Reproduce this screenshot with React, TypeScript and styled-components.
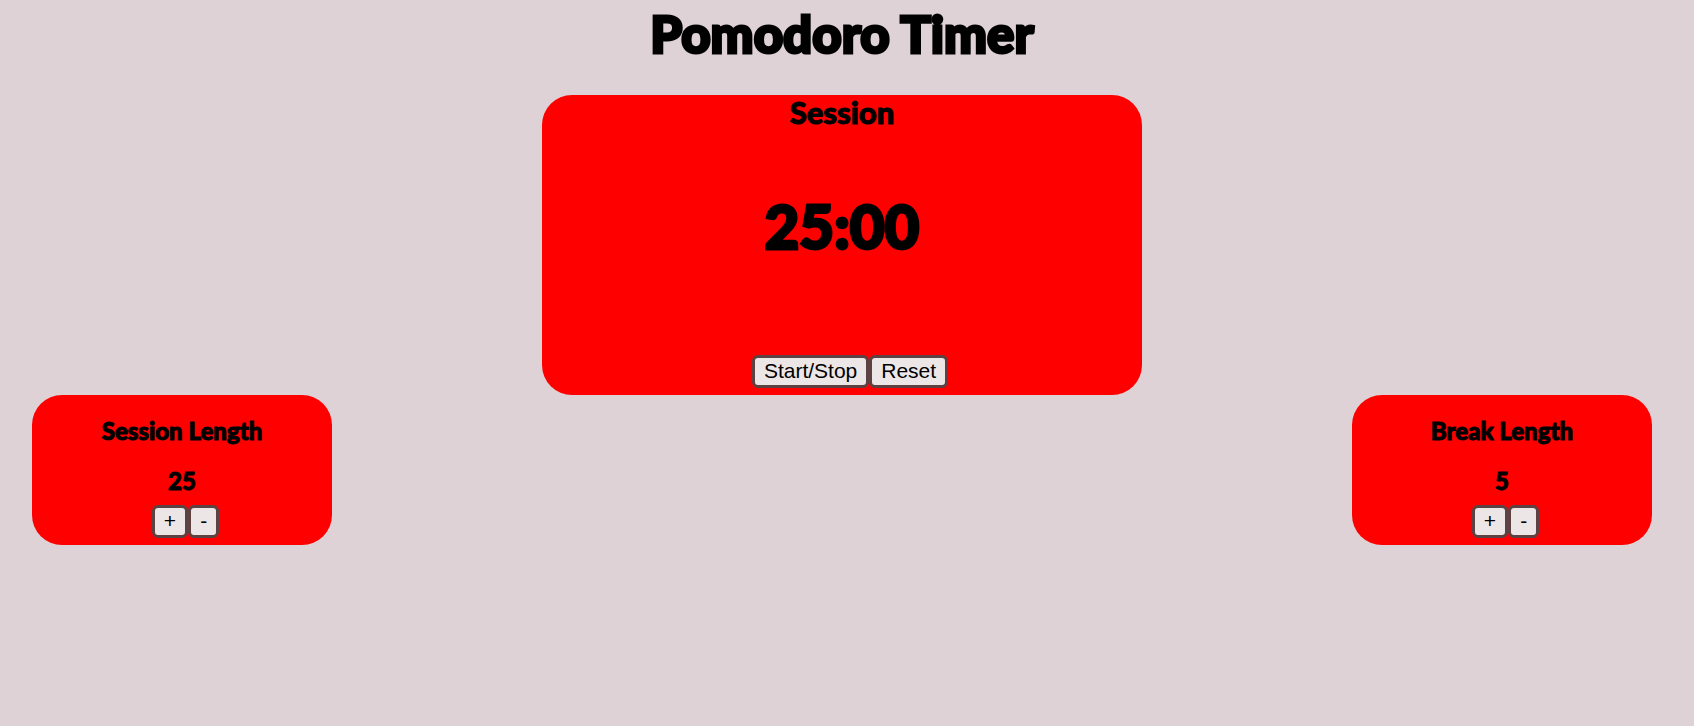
import React, { useEffect, useState } from "react";
import styled, { createGlobalStyle } from "styled-components";

const GlobalStyle = createGlobalStyle`
  body {
    margin: 0;
    background: #ded2d6;
    color: #000;
    font-family: Lato, "Liberation Sans", sans-serif;
  }
`;

const Page = styled.main`
  padding: 0 42px 0 32px;
  text-align: center;
`;

const Title = styled.h1`
  margin: 0 0 28px;
  font-size: 51px;
  font-weight: 900;
  line-height: 67px;
  -webkit-text-stroke: 3px #000;
`;

const Card = styled.section`
  display: flex;
  flex-direction: column;
  align-items: center;
  box-sizing: border-box;
  background: #f00;
  border-radius: 30px;
`;

const TimerCard = styled(Card)`
  width: 600px;
  max-width: 100%;
  min-height: 300px;
  margin: 0 auto;
  padding-bottom: 7px;
`;

const TimerLabel = styled.h2`
  margin: 0;
  font-size: 31px;
  font-weight: 900;
  line-height: 35px;
  -webkit-text-stroke: 1px #000;
`;

const TimeLeft = styled.div`
  margin-top: 56px;
  font-size: 60px;
  font-weight: 900;
  line-height: 80px;
  -webkit-text-stroke: 3px #000;
`;

const Controls = styled.div<{ $indent: number }>`
  display: flex;
  margin-top: auto;
  padding-left: ${({ $indent }) => $indent}px;
`;

const Button = styled.button`
  height: 33px;
  padding: 0 9px 2px;
  border: 3px solid #5c4242;
  border-radius: 6px;
  background: #ede6e6;
  color: #000;
  font: 21px/24px "Liberation Sans", sans-serif;
  cursor: pointer;
`;

const Settings = styled.div`
  display: flex;
  flex-wrap: wrap;
  justify-content: space-between;
`;

const LengthCard = styled(Card)`
  width: 300px;
  min-height: 150px;
  padding: 21px 0 7px;
`;

const LengthLabel = styled.h3`
  margin: 0;
  font-size: 24px;
  font-weight: 900;
  line-height: 30px;
  -webkit-text-stroke: 1px #000;
`;

const LengthValue = styled.output`
  margin-top: 20px;
  font-size: 24px;
  font-weight: 900;
  line-height: 30px;
  -webkit-text-stroke: 1px #000;
`;

type LengthProps = {
  label: string;
  value: number;
  onChange: (value: number) => void;
};

function LengthControl({ label, value, onChange }: LengthProps) {
  return (
    <LengthCard aria-label={label}>
      <LengthLabel>{label}</LengthLabel>
      <LengthValue>{value}</LengthValue>
      <Controls $indent={7}>
        <Button type="button" onClick={() => onChange(Math.min(60, value + 1))}>+</Button>
        <Button type="button" onClick={() => onChange(Math.max(1, value - 1))}>-</Button>
      </Controls>
    </LengthCard>
  );
}

const pad = (n: number) => String(n).padStart(2, "0");

export default function App() {
  const [sessionLength, setSessionLength] = useState(25);
  const [breakLength, setBreakLength] = useState(5);
  const [onBreak, setOnBreak] = useState(false);
  const [seconds, setSeconds] = useState(25 * 60);
  const [running, setRunning] = useState(false);

  useEffect(() => {
    if (!running) return;
    const id = setTimeout(() => {
      if (seconds > 0) {
        setSeconds(seconds - 1);
      } else {
        setSeconds((onBreak ? sessionLength : breakLength) * 60);
        setOnBreak(!onBreak);
      }
    }, 1000);
    return () => clearTimeout(id);
  }, [running, seconds, onBreak, sessionLength, breakLength]);

  const changeSession = (value: number) => {
    setSessionLength(value);
    if (!running && !onBreak) setSeconds(value * 60);
  };

  const changeBreak = (value: number) => {
    setBreakLength(value);
    if (!running && onBreak) setSeconds(value * 60);
  };

  const reset = () => {
    setRunning(false);
    setOnBreak(false);
    setSessionLength(25);
    setBreakLength(5);
    setSeconds(25 * 60);
  };

  return (
    <>
      <GlobalStyle />
      <Page>
        <Title>Pomodoro Timer</Title>
        <TimerCard>
          <TimerLabel>{onBreak ? "Break" : "Session"}</TimerLabel>
          <TimeLeft role="timer">
            {`${pad(Math.floor(seconds / 60))}:${pad(seconds % 60)}`}
          </TimeLeft>
          <Controls $indent={16}>
            <Button type="button" onClick={() => setRunning(!running)}>Start/Stop</Button>
            <Button type="button" onClick={reset}>Reset</Button>
          </Controls>
        </TimerCard>
        <Settings>
          <LengthControl label="Session Length" value={sessionLength} onChange={changeSession} />
          <LengthControl label="Break Length" value={breakLength} onChange={changeBreak} />
        </Settings>
      </Page>
    </>
  );
}
